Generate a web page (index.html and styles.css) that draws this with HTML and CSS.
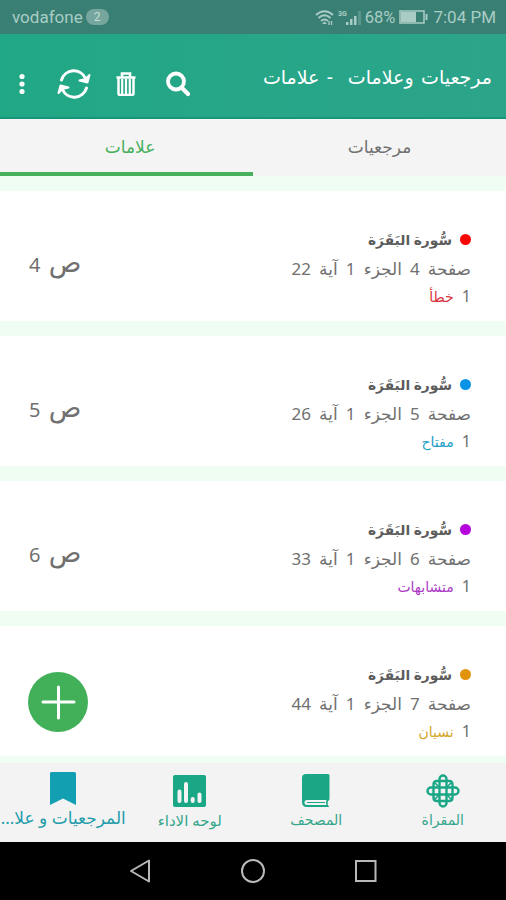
FILE: index.html
```html
<!DOCTYPE html>
<html lang="ar" dir="rtl">
<head>
  <meta charset="UTF-8" />
  <title>مرجعيات وعلامات</title>
  <link rel="stylesheet" href="styles.css">
</head>
<body>

  <div class="status" dir="ltr">
    <span class="carrier">vodafone</span>
    <span class="count">2</span>
    <div class="status-right">
      <svg class="wifi" width="19" height="17" viewBox="0 0 19 17" fill="none" stroke="currentColor" stroke-width="1.8">
        <path d="M1 6Q9.500-1.500 18 6M3.500 9Q9.500 3.500 15.500 9M6 12Q9.500 9 13 12" />
        <path d="M9.500 12.500L12 15H7Z" fill="currentColor" stroke="none" />
        <path d="M14 12v4M16.500 12v4" stroke-width="1.300" />
      </svg>
      <svg class="signal" width="25" height="18" viewBox="0 0 25 18" fill="currentColor">
        <text x="0" y="8" font-size="7" font-weight="bold">3G</text>
        <path d="M8 14h2.500v3H8zM12 11h2.500v6H12zM16 8h2.500v9H16z" />
        <path d="M20 3h3v14h-3z" opacity=".3" />
      </svg>
      <span class="percent">68%</span>
      <svg class="battery" width="29" height="14" viewBox="0 0 29 14" fill="none" stroke="currentColor">
        <rect x="1" y="1" width="24" height="12" stroke-width="1.500" />
        <rect x="2" y="2" width="15" height="10" fill="currentColor" stroke="none" />
        <path d="M27.500 4v6" stroke-width="2" />
      </svg>
      <span class="time">7:04 PM</span>
    </div>
  </div>

  <header>
    <h1>مرجعيات وعلامات  - علامات</h1>
    <div class="actions" dir="ltr">
      <svg class="dots" width="6" height="22" viewBox="0 0 6 22" fill="#fff">
        <circle cx="3" cy="3.500" r="2.600" /><circle cx="3" cy="11" r="2.600" /><circle cx="3" cy="18.500" r="2.600" />
      </svg>
      <svg class="refresh" width="34" height="30" viewBox="0 0 34 30" fill="none" stroke="#fff" stroke-width="3" stroke-linecap="round">
        <path d="M4.500 11A12.800 12.800 0 0 1 28.500 9.500M29.500 19A12.800 12.800 0 0 1 5.500 20.500" />
        <path d="M32.500 6L30.500 13.500L22.500 11.500L28.500 10Z M1.500 24L3.500 16.500L11.500 18.500L5.500 20Z" fill="#fff" stroke-width="2" stroke-linejoin="round" />
      </svg>
      <svg class="trash" width="20" height="24" viewBox="0 0 20 24" fill="none" stroke="#fff">
        <path d="M0.500 5.500h19M6 5V1.500h8V5" stroke-width="2.600" />
        <path d="M2.500 6v15.500q0 1.500 1.500 1.500h12q1.500 0 1.500-1.500V6" stroke-width="2.500" />
        <path d="M6.200 7v15M10 7v15M13.800 7v15" stroke-width="2.200" />
      </svg>
      <svg class="search" width="24" height="26" viewBox="0 0 24 26" fill="none" stroke="#fff">
        <circle cx="10" cy="10.500" r="8" stroke-width="3.800" />
        <path d="M16 17l6 6" stroke-width="4.200" stroke-linecap="round" />
      </svg>
    </div>
  </header>

  <nav class="tabs">
    <div class="tab"><span>مرجعيات</span></div>
    <div class="tab active"><span>علامات</span></div>
  </nav>

  <main>
    <div class="card red">
      <div class="info">
        <div class="sura"><i class="dot"></i>سُّورة البَقَرَة</div>
        <div class="place">صفحة 4 الجزء 1 آية 22</div>
        <div class="kind">1 <b>خطأ</b></div>
      </div>
      <div class="page"><span>ص</span> 4</div>
    </div>
    <div class="card blue">
      <div class="info">
        <div class="sura"><i class="dot"></i>سُّورة البَقَرَة</div>
        <div class="place">صفحة 5 الجزء 1 آية 26</div>
        <div class="kind">1 <b>مفتاح</b></div>
      </div>
      <div class="page"><span>ص</span> 5</div>
    </div>
    <div class="card purple">
      <div class="info">
        <div class="sura"><i class="dot"></i>سُّورة البَقَرَة</div>
        <div class="place">صفحة 6 الجزء 1 آية 33</div>
        <div class="kind">1 <b>متشابهات</b></div>
      </div>
      <div class="page"><span>ص</span> 6</div>
    </div>
    <div class="card orange">
      <div class="info">
        <div class="sura"><i class="dot"></i>سُّورة البَقَرَة</div>
        <div class="place">صفحة 7 الجزء 1 آية 44</div>
        <div class="kind">1 <b>نسيان</b></div>
      </div>
    </div>
    <div class="add">
      <svg width="60" height="60" viewBox="0 0 60 60" stroke="#fff" stroke-width="3" stroke-linecap="round">
        <path d="M15 30h31M30.500 15v31" />
      </svg>
    </div>
  </main>

  <footer>
    <div class="item">
      <svg width="34" height="34" viewBox="0 0 34 34" fill="none" stroke="#1aa786" stroke-width="2.400">
        <rect x="13.500" y="1.500" width="7" height="31" rx="3.500" />
        <rect x="1.500" y="13.500" width="31" height="7" rx="3.500" />
        <path d="M7.500 10.500q0-3.500 3.500-3.500h12q3.500 0 3.500 3.500v13q0 3.500-3.500 3.500H11q-3.500 0-3.500-3.500z" />
        <path d="M13.500 13.500L9 9M20.500 13.500L25 9M13.500 20.500L9 25M20.500 20.500L25 25" stroke-width="1.600" />
      </svg>
      <span>المقراة</span>
    </div>
    <div class="item book">
      <svg width="28" height="34" viewBox="0 0 28 34">
        <path d="M4 0h22q1.500 0 1.500 1.500V25q0 1.500-1.500 2-1 2.500 0 4.500 1 0 1 1.500H5q-5 0-5-5V4q0-4 4-4z" fill="#1aa786" />
        <path d="M5 26h19.500q-1 2.500 0 5H5q-2.500 0-2.500-2.500T5 26z" fill="#f3f3f3" />
        <path d="M5 28.500h18" stroke="#1aa786" />
      </svg>
      <span>المصحف</span>
    </div>
    <div class="item board">
      <svg width="33" height="34" viewBox="0 0 33 34">
        <rect y="1" width="33" height="32" rx="2" fill="#1aa786" />
        <path d="M6.500 17.500v9.500M13 10v17M19.700 25v2M26.500 20.500v6.500" stroke="#f3f3f3" stroke-width="4" stroke-linecap="round" />
      </svg>
      <span>لوحه الاداء</span>
    </div>
    <div class="item current">
      <svg width="26" height="34" viewBox="0 0 26 34">
        <path d="M0 1.500Q0 0 1.500 0h23Q26 0 26 1.500V33L13 26.500L0 33z" fill="#139fb2" />
      </svg>
      <span>المرجعيات و علا...</span>
    </div>
  </footer>

  <div class="system" dir="ltr">
    <svg width="24" height="26" viewBox="0 0 24 26" fill="none" stroke="#b9b9b9" stroke-width="2" stroke-linejoin="round">
      <path d="M21 2.500v21L3 13z" />
    </svg>
    <svg width="26" height="26" viewBox="0 0 26 26" fill="none" stroke="#b9b9b9" stroke-width="2">
      <circle cx="13" cy="13" r="11" />
    </svg>
    <svg width="24" height="26" viewBox="0 0 24 26" fill="none" stroke="#b9b9b9" stroke-width="2">
      <rect x="2" y="3" width="19.500" height="20" />
    </svg>
  </div>

</body>
</html>
```
FILE: styles.css
```css
* {
  box-sizing: border-box;
}

body {
  margin: 0;
  height: 900px;
  display: flex;
  flex-direction: column;
  background: #effdf2;
  font-family: "Noto Sans", "DejaVu Sans", sans-serif;
  color: #707070;
  overflow: hidden;
}

svg {
  display: block;
  flex: none;
}

/* phone status bar */
.status {
  height: 34px;
  padding: 0 10px 0 12px;
  display: flex;
  align-items: center;
  background: #3a7f73;
  color: #a9cdc5;
  font-family: Roboto, sans-serif;
  font-size: 17px;
}

.count {
  width: 23px;
  height: 16px;
  margin-left: 3px;
  border-radius: 8px;
  background: #76a69d;
  color: #c4ddd7;
  font-size: 12px;
  line-height: 16px;
  text-align: center;
}

.status-right {
  margin-left: auto;
  display: flex;
  align-items: center;
}

.signal {
  margin: 0 2px 0 4px;
}

.percent {
  font-size: 16.5px;
}

.battery {
  margin: 0 5px 0 4px;
}

/* app bar */
header {
  height: 85px;
  padding: 0 14px 0 19px;
  display: flex;
  align-items: flex-start;
  justify-content: space-between;
  background: linear-gradient(to right, #21a885, #2ca48a);
  border-bottom: 2px solid #17967a;
}

h1 {
  margin: 29px 0 0;
  color: #fff;
  font-size: 19px;
  font-weight: normal;
  line-height: 28px;
  white-space: pre;
  word-spacing: 2.5px;
}

.actions {
  display: flex;
  align-items: center;
  margin-top: 35px;
}

.refresh {
  margin-left: 32px;
}

.trash {
  margin-left: 25px;
}

.search {
  margin-left: 30px;
}

.tabs {
  height: 57px;
  display: flex;
  background: #f4f4f4;
}

.tab {
  width: 50%;
  font-size: 17px;
  line-height: 56px;
  text-align: center;
}

.tab.active {
  padding-left: 7px;
  color: #46b05c;
  border-bottom: 4px solid #46b05c;
}

main {
  flex: 1;
  position: relative;
  padding-top: 15px;
  display: flex;
  flex-direction: column;
  gap: 15px;
}

.card {
  height: 130px;
  padding: 34px 35px 0 29px;
  display: flex;
  justify-content: space-between;
  background: #fff;
}

.sura {
  display: flex;
  align-items: center;
  height: 29px;
  font-size: 13.8px;
  font-weight: bold;
  color: #5c5c5c;
}

.dot {
  width: 11px;
  height: 11px;
  margin-left: 8px;
  border-radius: 50%;
}

.place {
  height: 29px;
  font-size: 17px;
  line-height: 30px;
  white-space: nowrap;
  word-spacing: 3.7px;
}

.kind {
  height: 26px;
  font-size: 16px;
  line-height: 26px;
}

.kind b {
  margin-right: 4px;
  font-size: 14px;
  font-weight: normal;
}

.page {
  margin-top: 23px;
  height: 30px;
  font-size: 20px;
  line-height: 30px;
  word-spacing: 3px;
}

.page span {
  font-size: 27px;
  line-height: 1;
}

.red .dot { background: #f90505; }
.red b { color: #d8323c; }
.blue .dot { background: #0b93e6; }
.blue b { color: #239fc6; }
.purple .dot { background: #b505dc; }
.purple b { color: #ab3ac4; }
.orange .dot { background: #e2930c; }
.orange b { color: #d5a72c; }

/* floating button */
.add {
  position: absolute;
  left: 28px;
  top: 496px;
  width: 60px;
  height: 60px;
  border-radius: 50%;
  background: #42b058;
}

footer {
  height: 79px;
  display: flex;
  background: #f3f3f3;
}

.item {
  width: 25%;
  padding-top: 11px;
  display: flex;
  flex-direction: column;
  align-items: center;
  color: #35a68b;
  font-size: 14px;
  line-height: 24px;
  white-space: nowrap;
}

.board {
  font-size: 15px;
}

.current {
  padding-top: 9px;
  color: #239cab;
  font-size: 17px;
}

.system {
  height: 58px;
  display: flex;
  justify-content: center;
  align-items: center;
  gap: 88px;
  background: #000;
}
```
